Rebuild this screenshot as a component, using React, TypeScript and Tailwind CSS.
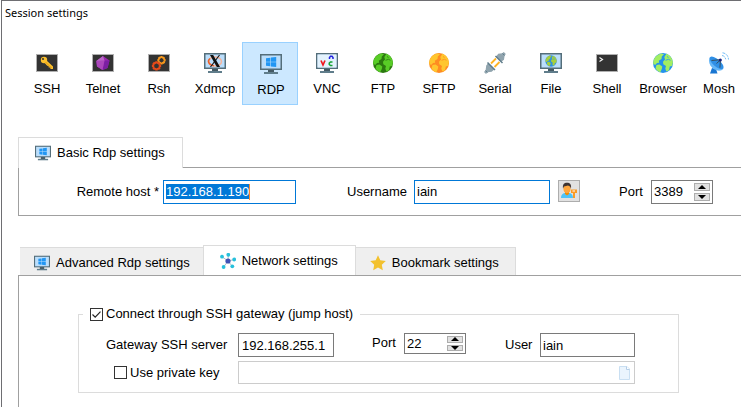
import { useEffect, useRef, useState } from "react";
import type { ReactNode } from "react";

function Terminal({ children }: { children?: ReactNode }) {
  return (
    <svg viewBox="0 0 22 22" className="h-[22px] w-[22px]" aria-hidden="true">
      <rect x="0.5" y="2.5" width="21" height="17" fill="#333333" stroke="#b0b0b0" />
      {children}
    </svg>
  );
}

function Monitor({ children, small }: { children?: ReactNode; small?: boolean }) {
  return (
    <svg viewBox="0 0 22 22" className={small ? "h-4 w-4 shrink-0" : "h-[22px] w-[22px]"} aria-hidden="true">
      <rect x="8" y="16" width="6" height="4" fill="#455a64" />
      <rect x="4" y="19" width="14" height="2" fill="#607d8b" />
      <rect x="0" y="1" width="22" height="16" fill="#546e7a" />
      <rect x="1.5" y="2.5" width="19" height="13" fill="#bbdefb" />
      {children}
    </svg>
  );
}

function WindowsFlag() {
  return (
    <path
      d="M6 5.300 10.400 4.700v4H6zM11 4.600l5.200-.7v4.800H11zM6 9.300h4.400v4L6 12.700zM11 9.300h5.200v4.800l-5.200-.7z"
      fill="#2196f3"
    />
  );
}

function Globe({ sea, land }: { sea: string; land: string }) {
  return (
    <g>
      <circle cx="11" cy="11" r="10" fill={sea} />
      <path
        d="M3.500 4.800C5 3 7 1.800 9.500 1.400L12 2.200 9.800 4.500 9.500 7 6.800 8.800 7.200 10.800 5 11 3.500 12.800 1.300 12.200C1 9 1.800 7 3.500 4.800zM4.500 13l3-.5 2.800 2-.5 2.500-1.600 3.400C6 19.500 4.500 18 3.500 16.500z"
        fill={land}
      />
      <path
        d="M14.500 1.800C18 3.200 20.500 6.200 20.900 10.500L20 14 17.800 14.500 17 18.200 14.300 19.600 13.300 16.500 14 14 11.300 12.300 11 9.800 13 7.500 12.300 5z"
        fill={land}
      />
      <path d="m13.500 8.300 3-1 2 1M15 4.500l1.500 1" fill="none" stroke={sea} strokeWidth=".8" />
    </g>
  );
}

function GlobeIcon({ sea, land }: { sea: string; land: string }) {
  return (
    <svg viewBox="0 0 22 22" className="h-[22px] w-[22px]" aria-hidden="true">
      <Globe sea={sea} land={land} />
    </svg>
  );
}

const cog =
  "M-.7-4h1.400l.3 1.100.8.400 1.100-.6 1 1-.6 1.100.4.800 1.100.3v1.400l-1.100.3-.4.800.6 1.100-1 1-1.100-.6-.8.400-.3 1.100h-1.400l-.3-1.100-.8-.4-1.100.6-1-1 .6-1.100-.4-.8-1.100-.3v-1.400l1.100-.3.400-.8-.6-1.100 1-1 1.100.6.800-.4z";

const sessions: { name: string; icon: ReactNode }[] = [
  {
    name: "SSH",
    icon: (
      <Terminal>
        <circle cx="8" cy="8" r="3.200" fill="#fbc02d" />
        <path d="M9.500 7.500 17 14.500V17h-2.500l-.3-1.400-1.500-.2-.2-1.500-1.300-.2L7.500 9.700z" fill="#fbc02d" />
        <circle cx="7" cy="7" r="1" fill="#333333" />
        <path d="m9.500 10 6 6" stroke="#d98e0b" strokeWidth=".8" />
      </Terminal>
    ),
  },
  {
    name: "Telnet",
    icon: (
      <Terminal>
        <path d="m11 4 6.500 4.500L15.500 16l-5 2L5 14.500 4.300 9z" fill="#9c27b0" />
        <path d="m12.500 8.500 5 0-2 7.500-5 2z" fill="#7b1fa2" />
        <path d="M4.300 9l8.200-.5-2 9.500L5 14.500z" fill="#ab47bc" />
        <path d="m11 4 1.500 4.500L4.300 9z" fill="#ba68c8" />
      </Terminal>
    ),
  },
  {
    name: "Rsh",
    icon: (
      <Terminal>
        <g fill="none">
          <path d={cog} transform="translate(13.500 7.700) scale(.72)" stroke="#fb9a1c" strokeWidth="2" />
          <path d={cog} transform="translate(8.500 13.300) scale(.8)" stroke="#e64a19" strokeWidth="2" />
        </g>
      </Terminal>
    ),
  },
  {
    name: "Xdmcp",
    icon: (
      <Monitor>
        <ellipse cx="11" cy="9.500" rx="6.500" ry="4.500" fill="none" stroke="#f5b49c" strokeWidth="1.500" />
        <path d="M10 13.800A6.500 4.500 0 0 1 6 6.500" fill="none" stroke="#e8602c" strokeWidth="1.500" />
        <path d="M6 3h3.200l6.800 12h-3.200z" fill="#111111" />
        <path d="M15.500 3 6.500 15" stroke="#111111" strokeWidth="1.100" />
      </Monitor>
    ),
  },
  { name: "RDP", icon: <Monitor><WindowsFlag /></Monitor> },
  {
    name: "VNC",
    icon: (
      <Monitor>
        <rect x="1.500" y="2.500" width="19" height="13" fill="#e3f2fd" />
        <path d="m5 8.500 2 4.500 2-4.500" fill="none" stroke="#f01820" strokeWidth="1.700" />
        <path d="M13.500 7V5.500l1-1.300h1.500l1 1.300V7" fill="none" stroke="#2222dd" strokeWidth="1.500" />
        <path d="M16.500 10h-2l-1.200 1v1.500l1.200 1h2" fill="none" stroke="#16a334" strokeWidth="1.600" />
      </Monitor>
    ),
  },
  { name: "FTP", icon: <GlobeIcon sea="#2b780f" land="#58cc26" /> },
  { name: "SFTP", icon: <GlobeIcon sea="#ff8c22" land="#ffc62e" /> },
  {
    name: "Serial",
    icon: (
      <svg viewBox="0 0 22 22" className="h-[22px] w-[22px]" aria-hidden="true">
        <path d="m7 11.500 5-5M10.500 15l5-5" stroke="#ffb322" strokeWidth="1.800" />
        <path d="m12.200 4.500 2-2.700 4-.5 1.600-1.300 2 2-1.200 1.700-.6 4.100-2.700 2z" fill="#90a4ae" />
        <path d="m4.200 11 6 6.500-2.500 2.200-4 .5L2 22 0 20l1.600-1.800.6-4.700z" fill="#90a4ae" />
        <path d="m11.500 4 7 7M3.500 10.500l7.500 7.500" stroke="#607d8b" strokeWidth="1.500" />
        <path d="m18.500 1.500 2 2M1.500 18.500l2 2" stroke="#607d8b" />
      </svg>
    ),
  },
  {
    name: "File",
    icon: (
      <Monitor>
        <g transform="translate(4.800 2.700) scale(.57)">
          <Globe sea="#2f8fe0" land="#a6cf3c" />
        </g>
      </Monitor>
    ),
  },
  {
    name: "Shell",
    icon: (
      <Terminal>
        <path d="m3.500 5.500 3 2-3 2" fill="none" stroke="#f4f4f4" strokeWidth="1.200" />
      </Terminal>
    ),
  },
  { name: "Browser", icon: <GlobeIcon sea="#2492ec" land="#a2ee62" /> },
  {
    name: "Mosh",
    icon: (
      <svg viewBox="0 0 22 22" className="h-[22px] w-[22px]" aria-hidden="true">
        <path d="m4 16-2 5.500h7.500L8 17z" fill="#1976d2" />
        <path d="M2 5C-.5 9.500 2 15 6.500 17.500c3.500 1.800 7 1.500 9-.8z" fill="#64b5f6" />
        <ellipse cx="8.600" cy="10.800" rx="8.600" ry="3.600" transform="rotate(41 8.600 10.800)" fill="#2f8fe6" />
        <path d="m3.500 8.500 9-.8-.6 8M12.300 8 8.500 11.500" fill="none" stroke="#37474f" strokeWidth=".9" />
        <circle cx="12.300" cy="8" r="1.600" fill="#1a237e" />
        <path d="M14 3.500c2 .3 3.500 1.800 3.700 3.800M14.500.8c3.500.4 5.800 3 6 6.700" fill="none" stroke="#64b5f6" strokeWidth=".9" strokeDasharray="3 1" />
      </svg>
    ),
  },
];

function NetworkIcon() {
  const dots = [[8.300, 1.800], [2, 3.700], [14.200, 6.500], [3.600, 14], [12.300, 13.300]];
  return (
    <svg viewBox="0 0 16 16" className="h-4 w-4 shrink-0" aria-hidden="true">
      {dots.map(([x, y]) => (
        <g key={x}>
          <path d={`M8 8 ${x} ${y}`} stroke="#b0bec5" />
          <circle cx={x} cy={y} r="1.900" fill="#26c0dc" />
        </g>
      ))}
      <circle cx="8" cy="8" r="2.600" fill="#3f51b5" />
    </svg>
  );
}

function StarIcon() {
  return (
    <svg viewBox="0 0 16 16" className="h-4 w-4 shrink-0" aria-hidden="true">
      <path d="m8 .3 2.300 5 5.500.7-4 3.800 1 5.500L8 12.600l-4.800 2.700 1-5.500-4-3.800 5.500-.7z" fill="#f2c12e" />
    </svg>
  );
}

function UserKeyIcon() {
  return (
    <svg viewBox="0 0 18 18" className="h-[18px] w-[18px]" aria-hidden="true">
      <path d="M1 16c0-3.500 2-5 4.500-5h3c2.500 0 4.500 1.500 4.500 5z" fill="#4fc3f7" />
      <path d="M5 10h4v2l-2 1.500L5 12z" fill="#f08c00" />
      <ellipse cx="7" cy="6.500" rx="3.600" ry="4.500" fill="#ffa63d" />
      <path d="M3 6.500C2.500 2.500 4 .8 7 .8s4.600 1.700 4 5.700L10 4.500 8 3.500l-4 1z" fill="#3e3432" />
      <path d="M11 7.500h6V11h-2v5h-2v-5h-2z" fill="#fb9b24" />
      <path d="M12.500 9h2.500" stroke="#fff" />
    </svg>
  );
}

function TabLabel({ icon, children, active }: { icon: ReactNode; children: string; active?: boolean }) {
  return (
    <button
      type="button"
      role="tab"
      aria-selected={!!active}
      className={
        active
          ? "-mb-px flex h-[31px] items-center gap-1.5 border border-b-0 border-[#dcdcdc] bg-white pr-[17px] pl-4"
          : "flex h-7 items-center gap-1.5 border border-x-0 border-b-0 border-[#dcdcdc] bg-[#efefef] pt-0.5 pr-[13px] pl-3.5 last:border-r last:pr-4"
      }
    >
      {icon}
      {children}
    </button>
  );
}

function PortField({ id, value, compact }: { id: string; value: number; compact?: boolean }) {
  const [port, setPort] = useState(value);
  const step =
    "flex w-4 flex-1 items-center justify-center border border-[#adadad] bg-[#e1e1e1]";
  return (
    <div
      className={
        compact
          ? "flex h-[21px] w-[62px] border border-[#7a7a7a]"
          : "flex h-6 w-[62px] border border-[#7a7a7a]"
      }
    >
      <input
        id={id}
        inputMode="numeric"
        value={port}
        onChange={(e) => setPort(Number(e.target.value) || 0)}
        className="w-full min-w-0 pl-0.5 outline-none"
      />
      <div className="flex flex-col gap-0.5 p-0.5">
        <button type="button" aria-label="Increase port" className={step} onClick={() => setPort(port + 1)}>
          <svg viewBox="0 0 8 4" className="h-1 w-2" aria-hidden="true"><path d="M4 0 8 4H0z" /></svg>
        </button>
        <button type="button" aria-label="Decrease port" className={step} onClick={() => setPort(port - 1)}>
          <svg viewBox="0 0 8 4" className="h-1 w-2" aria-hidden="true"><path d="M0 0h8L4 4z" /></svg>
        </button>
      </div>
    </div>
  );
}

function CheckBox({ label, initial }: { label: string; initial: boolean }) {
  const [checked, setChecked] = useState(initial);
  return (
    <label className="flex items-center gap-[3px] whitespace-nowrap">
      <span className="grid">
        <input
          type="checkbox"
          checked={checked}
          onChange={(e) => setChecked(e.target.checked)}
          className="col-start-1 row-start-1 h-[13px] w-[13px] appearance-none border border-[#333333] bg-white"
        />
        {checked && (
          <svg viewBox="0 0 13 13" className="pointer-events-none col-start-1 row-start-1 h-[13px] w-[13px]" aria-hidden="true">
            <path d="m2.500 6.500 2.700 2.700 5.300-5.500" fill="none" stroke="#222" strokeWidth="1.200" />
          </svg>
        )}
      </span>
      {label}
    </label>
  );
}

export default function App() {
  const [session, setSession] = useState("RDP");
  const host = useRef<HTMLInputElement>(null);
  useEffect(() => {
    host.current?.focus();
    host.current?.select();
  }, []);

  return (
    <div className="ml-px flex min-h-screen flex-col overflow-hidden border-t border-l border-[#6e6e72] bg-white font-['Liberation_Sans',Arial,sans-serif] text-[13px] leading-4 text-black">
      <h1 className="pt-1 pl-[3px] font-['Noto_Sans','Open_Sans',sans-serif] text-[11px] leading-4">Session settings</h1>

      <nav className="mt-[21px] flex pl-4" aria-label="Session type">
        {sessions.map(({ name, icon }) => (
          <button
            key={name}
            type="button"
            onClick={() => setSession(name)}
            className={
              session === name
                ? "flex h-[63px] w-14 shrink-0 flex-col items-center gap-[7px] border border-[#99d1ff] bg-[#cce8ff] pt-2.5 pl-0.5"
                : "flex h-[63px] w-14 shrink-0 flex-col items-center gap-[7px] border border-transparent pt-[9px] pl-0.5"
            }
          >
            {icon}
            <span className="whitespace-nowrap">{name}</span>
          </button>
        ))}
      </nav>

      <section className="mt-8 pl-4">
        <div role="tablist" className="flex">
          <TabLabel active icon={<Monitor small><WindowsFlag /></Monitor>}>Basic Rdp settings</TabLabel>
        </div>
        <div className="flex h-[49px] items-center border border-r-0 border-[#a0a0a0]">
          <label htmlFor="host" className="w-36 pr-1 text-right whitespace-nowrap">Remote host *</label>
          <div className="relative">
            <input
              id="host"
              ref={host}
              defaultValue="192.168.1.190"
              className="h-6 w-[133px] border border-[#0078d7] pl-0.5 outline-none selection:bg-[#0078d7] selection:text-white"
            />
            <span className="absolute top-1 left-[86px] h-4 w-px bg-[#ff8728]" />
          </div>
          <label htmlFor="username" className="ml-[51px] w-[67px] whitespace-nowrap">Username</label>
          <input
            id="username"
            defaultValue="iain"
            className="h-6 w-[136px] border border-[#0078d7] pl-0.5 outline-none"
          />
          <button
            type="button"
            aria-label="Manage credentials"
            className="ml-2 flex h-[22px] w-[22px] items-center justify-center self-start border border-[#adadad] bg-[#e1e1e1] mt-3"
          >
            <UserKeyIcon />
          </button>
          <label htmlFor="port" className="ml-[39px] w-8">Port</label>
          <PortField id="port" value={3389} />
        </div>
      </section>

      <section className="mt-[29px] flex flex-1 flex-col pl-4">
        <div role="tablist" className="flex items-end pl-0.5">
          <TabLabel icon={<Monitor small><WindowsFlag /></Monitor>}>Advanced Rdp settings</TabLabel>
          <TabLabel active icon={<NetworkIcon />}>Network settings</TabLabel>
          <TabLabel icon={<StarIcon />}>Bookmark settings</TabLabel>
        </div>
        <div className="flex-1 border-t border-l border-[#a0a0a0] pt-[30px] pr-[62px] pl-[59px]">
          <fieldset className="min-w-0 border border-[#dcdcdc] pr-[43px] pb-2">
            <legend className="ml-1 px-[7px]">
              <CheckBox initial label="Connect through SSH gateway (jump host)" />
            </legend>
            <div className="mt-[11px] flex items-start">
              <label htmlFor="gateway" className="w-[159px] shrink-0 py-1 pl-[27px] whitespace-nowrap">Gateway SSH server</label>
              <input id="gateway" defaultValue="192.168.255.1" className="h-6 w-24 shrink-0 border border-[#7a7a7a] pl-[3px] outline-none" />
              <label htmlFor="gateway-port" className="ml-[38px] w-8 shrink-0 py-0.5">Port</label>
              <PortField id="gateway-port" value={22} compact />
              <label htmlFor="gateway-user" className="ml-[39px] w-[35px] shrink-0 py-1">User</label>
              <input id="gateway-user" defaultValue="iain" className="h-6 w-0 flex-1 border border-[#7a7a7a] pl-0.5 outline-none" />
            </div>
            <div className="mt-1 flex items-center">
              <div className="w-[159px] shrink-0 pl-[35px]">
                <CheckBox initial={false} label="Use private key" />
              </div>
              <div className="flex h-[23px] flex-1 items-center border border-[#cccccc] pr-1">
                <input aria-label="Private key file" disabled className="w-0 flex-1 bg-white pl-0.5" />
                <button type="button" aria-label="Browse for key">
                  <svg viewBox="0 0 11 14" className="h-3.5 w-[11px]" aria-hidden="true">
                    <path d="M.5.5H8L10.500 3v10.500H.5z" fill="#eaf4fd" stroke="#c9dff2" />
                    <path d="M7.500.5V3.500h3" fill="#fff" stroke="#b4cde6" />
                  </svg>
                </button>
              </div>
            </div>
          </fieldset>
        </div>
      </section>
    </div>
  );
}
